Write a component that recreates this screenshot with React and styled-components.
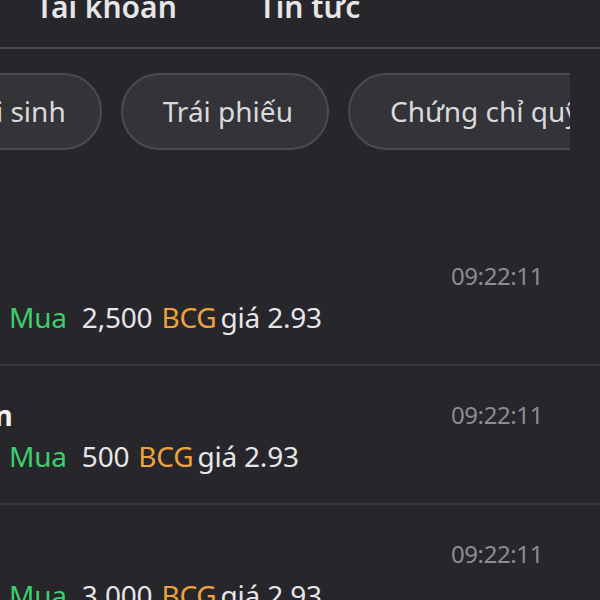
import * as React from "react";
import styled, { createGlobalStyle } from "styled-components";

const color = {
    bg: "#26262b",
    line: "#47474d",
    rowLine: "#37373d",
    chipBg: "#333338",
    chipBorder: "#4b4b50",
    text: "#e6e6e8",
    muted: "#8c8c91",
    buy: "#3ccf6c",
    ticker: "#eea23c",
}

const GlobalStyle = createGlobalStyle`
    html, body {
        margin: 0;
        padding: 0;
        background: ${color.bg};
    }
    body {
        font-family: "Noto Sans", "Liberation Sans", sans-serif;
    }
`

const Page = styled.div({
    width: "600px",
    height: "600px",
    overflow: "hidden",
    background: color.bg,
    color: color.text,
})

const TabBar = styled.div({
    display: "flex",
    alignItems: "flex-end",
    gap: "82px",
    height: "49px",
    paddingLeft: "36px",
    paddingBottom: "23px",
    boxSizing: "border-box",
    borderBottom: `solid 2px ${color.line}`,
})

const Tab = styled.span({
    fontSize: "30px",
    fontWeight: 600,
    lineHeight: "34px",
    color: color.text,
    whiteSpace: "nowrap",
})

const ChipScroller = styled.div({
    width: "570px",
    marginTop: "24px",
    overflow: "hidden",
})

const ChipTrack = styled.div({
    display: "flex",
    gap: "19px",
    marginLeft: "-96px",
})

const Chip = styled.div({
    display: "flex",
    alignItems: "center",
    flexShrink: 0,
    height: "77px",
    padding: "0 34px 2px 40px",
    boxSizing: "border-box",
    border: `solid 2px ${color.chipBorder}`,
    borderRadius: "40px",
    background: color.chipBg,
    fontSize: "28px",
    lineHeight: "40px",
    color: "#dadadc",
    whiteSpace: "nowrap",
})

const List = styled.div({
    marginTop: "77px",
    marginLeft: "-272px",
})

const Item = styled.div({
    padding: "30px 57px 27px 0",
    borderBottom: `solid 2px ${color.rowLine}`,
})

const TitleRow = styled.div({
    display: "flex",
    alignItems: "center",
    justifyContent: "space-between",
    height: "38px",
})

const Title = styled.span({
    fontSize: "28px",
    fontWeight: 700,
    lineHeight: "38px",
    color: "#f2f2f3",
    whiteSpace: "nowrap",
})

const Time = styled.span({
    fontSize: "24px",
    letterSpacing: "-0.4px",
    lineHeight: "38px",
    color: color.muted,
})

const DetailRow = styled.div({
    display: "flex",
    alignItems: "baseline",
    marginTop: "2px",
    fontSize: "28px",
    lineHeight: "40px",
    letterSpacing: "-0.2px",
    whiteSpace: "nowrap",
})

const Account = styled.span({
    display: "inline-block",
    width: "281px",
    flexShrink: 0,
    color: color.muted,
})

const Side = styled.span({
    color: color.buy,
    marginRight: "15px",
})

const Qty = styled.span({
    color: color.text,
    marginRight: "9px",
})

const Ticker = styled.span({
    color: color.ticker,
    marginRight: "4px",
})

const Price = styled.span({
    color: color.text,
})

const chips = ["Phái sinh", "Trái phiếu", "Chứng chỉ quỹ", "Cổ phiếu"]

const orders = [
    { title: "Khớp lệnh", qty: "2,500" },
    { title: "Khớp lệnh một phần", qty: "500" },
    { title: "Khớp lệnh", qty: "3,000" },
]

const OrderItem = ({ title, qty }) => (
    <Item>
        <TitleRow>
            <Title>{title}</Title>
            <Time>09:22:11</Time>
        </TitleRow>
        <DetailRow>
            <Account>TK 058C100001</Account>
            <Side>Mua</Side>
            <Qty>{qty}</Qty>
            <Ticker>BCG</Ticker>
            <Price>giá 2.93</Price>
        </DetailRow>
    </Item>
)

export default function App() {
    return (
        <Page>
            <GlobalStyle />
            <TabBar>
                <Tab>Tài khoản</Tab>
                <Tab>Tin tức</Tab>
            </TabBar>
            <ChipScroller>
                <ChipTrack>
                    {chips.map((c) => (
                        <Chip key={c}>{c}</Chip>
                    ))}
                </ChipTrack>
            </ChipScroller>
            <List>
                {orders.map((o, i) => (
                    <OrderItem key={i} {...o} />
                ))}
            </List>
        </Page>
    )
}
